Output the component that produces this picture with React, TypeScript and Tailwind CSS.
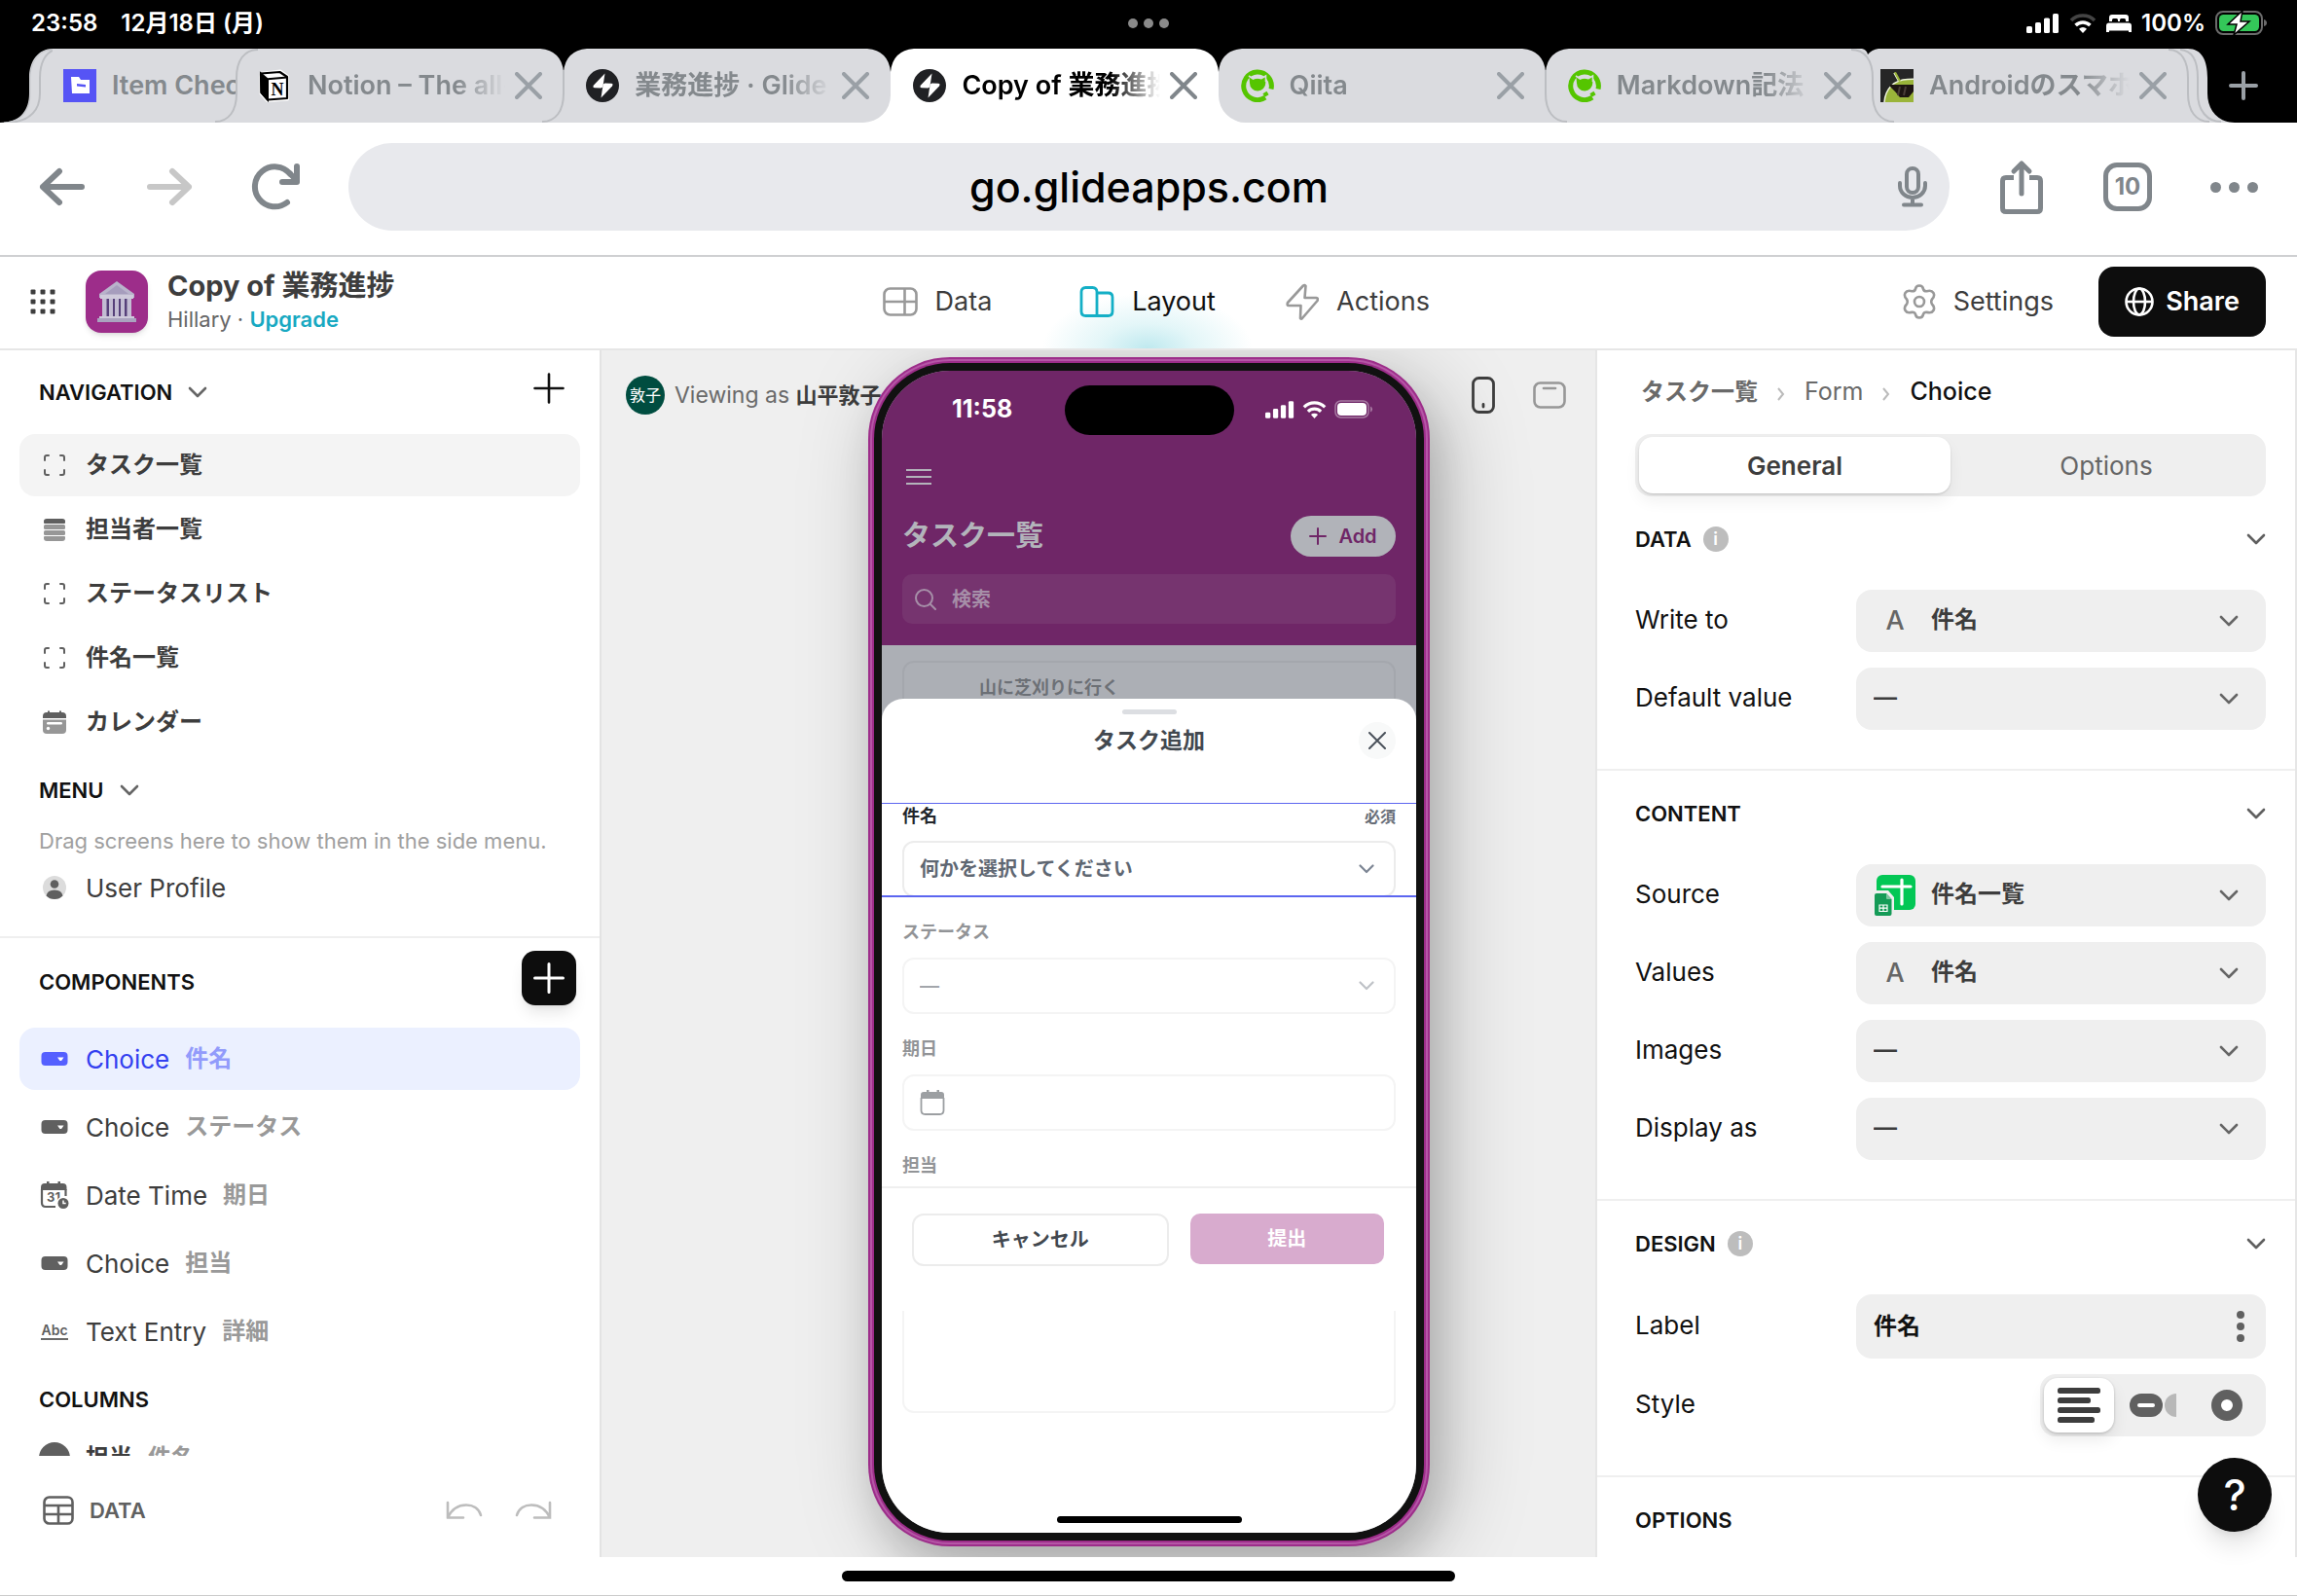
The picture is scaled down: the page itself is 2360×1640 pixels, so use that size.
import { useState } from "react";
import type { ReactNode } from "react";
import clsx from "clsx";

/* ---------- icons ---------- */

const Chevron = ({ className }: { className?: string }) => (
  <svg viewBox="0 0 20 12" className={clsx("h-3 w-5 shrink-0", className)} fill="none">
    <path d="M2 2l8 8 8-8" stroke="currentColor" strokeWidth="2.6" strokeLinecap="round" strokeLinejoin="round" />
  </svg>
);

const Cross = ({ className }: { className?: string }) => (
  <svg viewBox="0 0 28 28" className={clsx("size-7 shrink-0", className)} fill="none">
    <path d="M2 2l24 24M26 2L2 26" stroke="currentColor" strokeWidth="4" strokeLinecap="round" />
  </svg>
);

const Signal = ({ className }: { className?: string }) => (
  <svg viewBox="0 0 34 20" className={className} fill="currentColor">
    <rect x="0" y="13" width="6" height="7" rx="1.6" />
    <rect x="9" y="9" width="6" height="11" rx="1.6" />
    <rect x="18" y="4.5" width="6" height="15.5" rx="1.6" />
    <rect x="27" y="0" width="6" height="20" rx="1.6" />
  </svg>
);

const Wifi = ({ className, weak }: { className?: string; weak?: boolean }) => (
  <svg viewBox="0 0 28 20" className={className} fill="none" stroke="currentColor" strokeWidth="3.6">
    <path d="M2 7a17 17 0 0 1 24 0" stroke={weak ? "#444" : "currentColor"} />
    <path d="M6.600 12a10.500 10.500 0 0 1 14.800 0" />
    <path d="M14 20l-4-4.300a5.800 5.800 0 0 1 8 0z" fill="currentColor" stroke="none" />
  </svg>
);

const GlideLogo = () => (
  <svg viewBox="0 0 34 34" className="size-[34px] shrink-0">
    <circle cx="17" cy="17" r="17" fill="#202124" />
    <path d="M19.500 4.500L8 16.500q-1.500 2.500 1 2.700l6.500.3q1.700-.3 2-2z" fill="#fff" />
    <path d="M15.500 29.500L27 17.500q1.500-2.500-1-2.700l-6.500-.3q-1.700.3-2 2z" fill="#fff" />
  </svg>
);

const QiitaLogo = () => (
  <svg viewBox="0 0 34 34" className="size-[34px] shrink-0">
    <path d="M25 29.200A14.300 14.300 0 1 1 31 20.500" fill="none" stroke="#55c500" strokeWidth="5" />
    <path d="M23.500 27l4-2.500" stroke="#55c500" strokeWidth="4" />
    <path d="M8.500 8l4 2.200q4.500-1.700 8.500-.3l4-2.600.3 7A8 8 0 1 1 9 14.500z" fill="#55c500" />
    <path d="M8 7l4.500 3q4-2 8.500-.3L25.500 7v6" fill="none" stroke="#dadbdf" strokeWidth="1.600" />
  </svg>
);

const NotionLogo = () => (
  <svg viewBox="0 0 34 34" className="size-[34px] shrink-0">
    <path d="M2 4.500L22 2l7.500 5.500V31L8.500 32.500 2 25z" fill="#fff" stroke="#fff" strokeWidth="3" strokeLinejoin="round" />
    <path d="M2 4.500L21.500 3l7.500 5V30L9 31.500 2.500 24z" fill="#fff" stroke="#000" strokeWidth="2.200" strokeLinejoin="round" />
    <path d="M2 4.500l7 6V31.500L2.500 24zM9 10.300L29 8.500" fill="#000" stroke="#000" strokeWidth="2" />
    <text x="19" y="27" textAnchor="middle" fontSize="18" fontWeight="700" fontFamily="Liberation Serif">N</text>
  </svg>
);

const ItemLogo = () => (
  <svg viewBox="0 0 34 34" className="size-[34px] shrink-0">
    <rect width="34" height="34" fill="#5654f5" />
    <path d="M8 8h8l2 3h9v14H9z" fill="#fff" />
    <path d="M14 15l9 1v2.500l-9-1z" fill="#5654f5" />
  </svg>
);

const AndroidLogo = () => (
  <svg viewBox="0 0 34 34" className="size-[34px] shrink-0">
    <rect width="34" height="34" fill="#262626" />
    <path d="M4 34C5 20 14 11 28 10.500l6-.2V34z" fill="#9ab43a" />
    <path d="M4 34C5 20 14 11 28 10.500l6-.2M14 4l5 9" fill="none" stroke="#eef3dc" strokeWidth="1.500" />
    <path d="M14 3.500L19 13l2-1L16 3z" fill="#9ab43a" />
    <path d="M10 16h24v7l-5 6h-9l-5-6-5-5z" fill="#1e1512" />
    <path d="M20 18l-2 9M26 18l-2 9" stroke="#4a3d38" strokeWidth="2" />
  </svg>
);

const FrameIcon = () => (
  <svg viewBox="0 0 24 24" className="size-6" fill="none" stroke="#5f5f5f" strokeWidth="2" strokeLinecap="round">
    <path d="M2 7V4q0-2 2-2h2M18 2h2q2 0 2 2v3M22 17v3q0 2-2 2h-2M6 22H4q-2 0-2-2v-3" />
  </svg>
);

const StackIcon = () => (
  <svg viewBox="0 0 24 24" className="size-6">
    <path d="M1 5V3.500Q1 1 4 1h16q3 0 3 2.500V5q0 1-1 1H2Q1 6 1 5z" fill="#5f5f5f" />
    <rect x="1" y="7" width="22" height="5" rx="1.500" fill="#979797" />
    <rect x="1" y="13" width="22" height="5" rx="1.500" fill="#979797" />
    <path d="M1 20q0-1 1-1h20q1 0 1 1v1q0 3-3 3H4q-3 0-3-3z" fill="#979797" />
  </svg>
);

const CalendarIcon = () => (
  <svg viewBox="0 0 24 24" className="size-6">
    <path d="M0 8V6q0-4 4-4h1V.500h2V2h10V.500h2V2h1q4 0 4 4v2z" fill="#5f5f5f" />
    <path d="M0 9.500h24V20q0 4-4 4H4q-4 0-4-4z" fill="#979797" />
    <rect x="4" y="12" width="16" height="2.500" rx="1.200" fill="#fff" />
    <circle cx="5.500" cy="18.500" r="1.700" fill="#fff" />
  </svg>
);

const ProfileIcon = () => (
  <svg viewBox="0 0 24 24" className="size-6">
    <circle cx="12" cy="12" r="12" fill="#dcdcdc" />
    <circle cx="12" cy="8.500" r="4.300" fill="#5f5f5f" />
    <path d="M3.500 20.500q1-6 8.500-6t8.500 6Q17 24 12 24t-8.500-3.500z" fill="#5f5f5f" />
  </svg>
);

const ChoiceIcon = () => (
  <svg viewBox="0 0 28 14" className="h-3.5 w-7">
    <rect x="0.500" width="27" height="14" rx="4" fill="currentColor" />
    <path d="M17 5.500h6.500l-2 3q-1.200 1-2.400 0z" fill="#fff" />
  </svg>
);

const DateTimeIcon = () => (
  <svg viewBox="0 0 30 28" className="h-7 w-[30px]">
    <path d="M1 9V6q0-4 4-4h2V0h2.500v2h9V0H21v2h2.500q4 0 4 4v3z" fill="#5f5f5f" />
    <path d="M2 8v14q0 4 4 4h10M26.500 8v7" fill="none" stroke="#5f5f5f" strokeWidth="2.200" />
    <text x="7" y="21" fontSize="13" fontWeight="700" fill="#5f5f5f" fontFamily="Inter">31</text>
    <circle cx="24" cy="22.500" r="7" fill="#fff" />
    <circle cx="24" cy="22.500" r="5.500" fill="#5f5f5f" />
    <path d="M24 19.500v3h2.700" fill="none" stroke="#fff" strokeWidth="1.500" />
  </svg>
);

const AbcIcon = () => (
  <span className="w-7 border-b-2 border-[#6a6a6a] text-center text-sm leading-4 font-semibold text-[#5f5f5f]">Abc</span>
);

const BankIcon = () => (
  <svg viewBox="0 0 40 42" className="h-[42px] w-10">
    <path d="M20 0L2 13v4h36v-4z" fill="#b9b3cb" />
    <path d="M20 4L8 13h24z" fill="#a69dbd" />
    <rect x="3" y="14" width="34" height="4" fill="#cfcadb" />
    <rect x="7" y="18" width="26" height="18" fill="#56407a" />
    <g fill="#c3bdd3">
      <rect x="5" y="18" width="4.500" height="18" />
      <rect x="12" y="18" width="4" height="18" />
      <rect x="18" y="18" width="4" height="18" />
      <rect x="24" y="18" width="4" height="18" />
      <rect x="30.500" y="18" width="4.500" height="18" />
    </g>
    <rect x="2" y="36" width="36" height="3" fill="#cfcadb" />
    <rect x="0" y="38" width="40" height="4" fill="#aaa3bf" />
  </svg>
);

const SheetIcon = () => (
  <svg viewBox="0 0 42 42" className="size-[42px] shrink-0">
    <rect x="2" y="0" width="40" height="36" rx="6" fill="#03c755" />
    <path d="M8 12h29M28 5v25" stroke="#fff" strokeWidth="3.200" strokeLinecap="round" />
    <path d="M0 16h14l6 7v19H0z" fill="#efefef" />
    <path d="M2 19h10l5.500 6v15q0 2-2 2H2q-2 0-2-2V21q0-2 2-2z" fill="#159b57" />
    <path d="M12 19l5.500 6H13q-1 0-1-1z" fill="#7cc7a0" />
    <path d="M5 31h8v6.500H5zM5 34.200h8M9 31v6.500" fill="none" stroke="#fff" strokeWidth="1.200" />
  </svg>
);

/* ---------- browser ---------- */

const StatusBar = () => (
  <div className="grid h-[50px] shrink-0 grid-cols-3 items-center bg-black px-8 pb-0.5 text-2xl leading-none font-semibold text-white">
    <div className="flex gap-6">
      <span>23:58</span>
      <span>12月18日 (月)</span>
    </div>
    <div className="flex justify-center gap-1.5">
      <span className="size-2.5 rounded-full bg-[#8a8a8a]" />
      <span className="size-2.5 rounded-full bg-[#8a8a8a]" />
      <span className="size-2.5 rounded-full bg-[#8a8a8a]" />
    </div>
    <div className="-mr-0.5 flex items-center justify-end gap-2.5">
      <Signal className="h-5 w-[34px]" />
      <Wifi weak className="h-5 w-7" />
      <svg viewBox="0 0 26 18" className="h-[18px] w-[26px]" fill="currentColor">
        <path d="M3 7V3q0-3 3-3h14q3 0 3 3v4h-3V5.500Q20 4 18.500 4h-3Q14 4 14 5.500V7h-2V5.500Q12 4 10.500 4h-3Q6 4 6 5.500V7z" />
        <path d="M3 8.500h20q3 0 3 3V18h-3v-1.500H3V18H0v-6.500q0-3 3-3z" />
      </svg>
      <span>100%</span>
      <svg viewBox="0 0 54 26" className="h-[26px] w-[54px]">
        <rect x="1" y="1" width="47" height="23" rx="7" fill="none" stroke="#6b6b6b" strokeWidth="2" />
        <path d="M50 9q3 1 3 3.500T50 16z" fill="#6b6b6b" />
        <rect x="4" y="4" width="41" height="17" rx="4.500" fill="#34c759" />
        <path d="M28 0L13 14h9l-3 11 16-14h-9z" fill="#fff" stroke="#000" strokeWidth="1.500" />
      </svg>
    </div>
  </div>
);

type TabProps = {
  icon: ReactNode;
  title: string;
  active?: boolean;
  wrap?: string;
  shape?: string;
  closable?: boolean;
};

const Tab = ({ icon, title, active, wrap = "flex-1", shape = "pl-[23px]", closable = true }: TabProps) => (
  <div className={clsx("flex min-w-0", wrap)}>
    <div
      className={clsx(
        "flex min-w-0 flex-1 items-center",
        closable && "pr-[22px]",
        active ? "bg-white text-black" : "bg-[#dadbdf] text-[#84898d]",
        shape
      )}
    >
      {icon}
      <button
        type="button"
        className={clsx(
          "ml-4 min-w-0 flex-1 overflow-hidden text-left text-[27px] leading-9 font-semibold whitespace-nowrap",
          closable && "mask-r-from-75% mask-r-to-100%"
        )}
      >
        {title}
      </button>
      {closable && (
        <button type="button" aria-label="Close tab" className={clsx("ml-2.5", active ? "text-[#80868b]" : "text-[#9aa0a6]")}>
          <Cross />
        </button>
      )}
    </div>
  </div>
);

// seam drawn over the point where two tabs meet
const Seam = ({ type }: { type: "left" | "right" | "leftNotch" | "rightNotch" | "notch" }) => (
  <div className="relative w-0">
    <svg viewBox="0 0 48 76" className="absolute top-0 -left-6 z-10 h-[76px] w-12" fill="none">
      {type === "left" && <path d="M46 1C32 1 24 12 24 30V46C24 64 16 75 2 75" stroke="#bcbec2" strokeWidth="2" />}
      {type === "right" && (
        <>
          <path d="M13 0Q18 1 19 6Q23 1 30 0z" fill="#000" />
          <path d="M2 1C16 1 24 12 24 30V46C24 64 32 75 46 75" stroke="#bcbec2" strokeWidth="2" />
        </>
      )}
      {type.toLowerCase().includes("notch") && <path d="M0 0Q22 2 24 24Q26 2 48 0z" fill="#000" />}
      {type === "leftNotch" && <path d="M24 22V46C24 64 16 75 2 75" stroke="#bcbec2" strokeWidth="2" />}
      {type === "rightNotch" && <path d="M24 22V46C24 64 32 75 46 75" stroke="#bcbec2" strokeWidth="2" />}
    </svg>
  </div>
);

const TabStrip = () => (
  <div className="flex h-[76px] shrink-0 bg-black">
    <svg viewBox="0 0 54 76" className="h-[76px] w-[54px] shrink-0">
      <path d="M0 76C22 76 30 62 30 46V30C30 12 40 0 54 0V76z" fill="#dadbdf" />
      <path d="M10 76C32 74 41 62 41 46V30C41 14 47 4 56 1" fill="none" stroke="#bcbec2" strokeWidth="2" />
      <path d="M4 76C24 75 31 62 31 46V30C31 14 40 1 54 1" fill="none" stroke="#c6c8cc" strokeWidth="1" />
    </svg>
    <Tab icon={<ItemLogo />} title="Item Checklist" closable={false} wrap="w-[189px]" shape="pl-[11px]" />
    <Seam type="left" />
    <Tab icon={<NotionLogo />} title="Notion – The all-in-one" />
    <Seam type="leftNotch" />
    <Tab icon={<GlideLogo />} title="業務進捗 · Glide" wrap="flex-1 bg-white" shape="rounded-br-[28px] pl-[23px]" />
    <Seam type="notch" />
    <Tab active icon={<GlideLogo />} title="Copy of 業務進捗" />
    <Seam type="notch" />
    <Tab icon={<QiitaLogo />} title="Qiita" wrap="flex-1 bg-white" shape="rounded-bl-[28px] pl-[23px]" />
    <Seam type="rightNotch" />
    <Tab icon={<QiitaLogo />} title="Markdown記法" />
    <Seam type="right" />
    <Tab icon={<AndroidLogo />} title="Androidのスマホ" wrap="w-[324px]" shape="pl-2" />
    <div className="flex w-28 items-center">
      <svg viewBox="0 0 48 76" className="h-[76px] w-12 shrink-0 overflow-visible">
        <path d="M48 76C30 76 20 62 20 46V30C20 12 14 0 0 0V76z" fill="#dadbdf" />
        <path d="M-20 1C-6 1 0 14 0 30V46C0 64 8 75 22 75" fill="none" stroke="#bcbec2" strokeWidth="2" />
        <path d="M-8 1C5 2 10 14 10 30V46C10 64 20 75 34 75" fill="none" stroke="#bcbec2" strokeWidth="2" />
      </svg>
      <button type="button" aria-label="New tab" className="z-10 -ml-1.5 text-[#9aa0a6]">
        <svg viewBox="0 0 30 30" className="size-[30px]">
          <path d="M15 2v26M2 15h26" stroke="currentColor" strokeWidth="4" strokeLinecap="round" />
        </svg>
      </button>
    </div>
  </div>
);

const Toolbar = () => (
  <div className="flex h-[138px] shrink-0 items-center border-b-2 border-[#cfd0d2] bg-white px-10 pb-1 text-[#80868b]">
    <button type="button" aria-label="Back">
      <svg viewBox="0 0 48 40" className="h-10 w-12" fill="none" stroke="currentColor" strokeWidth="6" strokeLinecap="round" strokeLinejoin="round">
        <path d="M21 4L4 20l17 16M4 20h40" />
      </svg>
    </button>
    <button type="button" aria-label="Forward" className="ml-[62px] text-[#c7c7c7]">
      <svg viewBox="0 0 48 40" className="h-10 w-12" fill="none" stroke="currentColor" strokeWidth="6" strokeLinecap="round" strokeLinejoin="round">
        <path d="M27 4l17 16-17 16M44 20H4" />
      </svg>
    </button>
    <button type="button" aria-label="Reload" className="ml-[60px]">
      <svg viewBox="0 0 50 48" className="h-12 w-[50px]" fill="none" stroke="currentColor" strokeWidth="6" strokeLinecap="round">
        <path d="M37 40A20.500 20.500 0 1 1 40 10.500" />
        <path d="M47 3v16H32" strokeLinejoin="round" />
        <path d="M40 10.500l7 7" />
      </svg>
    </button>
    <div className="ml-[50px] flex h-[90px] flex-1 items-center rounded-full bg-[#e8e9ed] pr-[22px]">
      <input
        aria-label="Address"
        defaultValue="go.glideapps.com"
        className="min-w-0 flex-1 bg-transparent pl-[54px] text-center text-[43px] leading-none font-medium text-black outline-none"
      />
      <button type="button" aria-label="Voice search">
        <svg viewBox="0 0 32 42" className="h-[42px] w-8" fill="none" stroke="currentColor" strokeWidth="4">
          <rect x="10" y="2" width="12" height="25" rx="6" />
          <path d="M3 17v3a13 12 0 0 0 26 0v-3M16 33v6M7 39.500h18" strokeLinecap="round" />
        </svg>
      </button>
    </div>
    <button type="button" aria-label="Share" className="ml-[50px]">
      <svg viewBox="0 0 48 56" className="h-14 w-12" fill="none" stroke="currentColor" strokeWidth="5" strokeLinecap="round" strokeLinejoin="round">
        <path d="M16 18.500H8q-3.500 0-3.500 3.500v28q0 3.500 3.500 3.500h32q3.500 0 3.500-3.500V22q0-3.500-3.500-3.500h-8" strokeLinecap="butt" />
        <path d="M24 35V4M16 12l8-8 8 8" />
      </svg>
    </button>
    <button
      type="button"
      className="ml-[60px] flex size-[50px] items-center justify-center rounded-[14px] border-5 border-[#80868b] text-2xl font-bold"
    >
      10
    </button>
    <button type="button" aria-label="More" className="ml-[60px] flex gap-2">
      <span className="size-[11px] rounded-full bg-[#80868b]" />
      <span className="size-[11px] rounded-full bg-[#80868b]" />
      <span className="size-[11px] rounded-full bg-[#80868b]" />
    </button>
  </div>
);

/* ---------- builder header ---------- */

const AppHeader = () => (
  <header className="grid h-24 shrink-0 grid-cols-[1fr_auto_1fr] items-center border-b-2 border-[#e6e6e6] bg-white pr-8 pl-[30px] text-[27px] text-[#3d3d3d]">
    <div className="flex items-center pb-0.5">
      <button type="button" aria-label="Apps">
        <svg viewBox="0 0 28 28" className="size-7" fill="#3d3d3d">
          {[0, 1, 2].map((r) =>
            [0, 1, 2].map((c) => <rect key={`${r}${c}`} x={1.5 + c * 10} y={1.5 + r * 10} width="5" height="5" rx="1" />)
          )}
        </svg>
      </button>
      <div className="ml-[30px] flex size-16 items-center justify-center rounded-[16px] bg-[#9d2d8a] shadow-md">
        <BankIcon />
      </div>
      <div className="ml-5">
        <h1 className="text-[29px] leading-9 font-bold">Copy of 業務進捗</h1>
        <p className="text-[22px] leading-8 text-[#666]">
          Hillary ·{" "}
          <a href="#upgrade" className="font-semibold text-[#18a9c2]">
            Upgrade
          </a>
        </p>
      </div>
    </div>
    <nav className="flex h-full">
      <button type="button" className="flex w-[216px] items-center justify-center gap-[18px] pb-0.5">
        <svg viewBox="0 0 36 30" className="h-[30px] w-9" fill="none" stroke="#999" strokeWidth="2.600">
          <rect x="1.500" y="1.500" width="33" height="27" rx="6" />
          <path d="M2 15h32M22.500 2v26" />
        </svg>
        Data
      </button>
      <button
        type="button"
        className="flex w-[216px] items-center justify-center gap-[18px] bg-[radial-gradient(ellipse_50%_60%_at_50%_100%,#bfe9ef_0%,#e3f6f8_45%,#ffffff_100%)] pb-0.5 text-[#111]"
      >
        <svg viewBox="0 0 36 32" className="h-8 w-9" fill="none" stroke="#14afc6" strokeWidth="2.800">
          <path d="M18 30V6q0-4.500-4.500-4.500h-7Q2 1.500 2 6v20q0 4.500 4.500 4.500h23Q34 30.500 34 26V11.500Q34 7 29.500 7H18" />
        </svg>
        Layout
      </button>
      <button type="button" className="flex w-[216px] items-center justify-center gap-[18px] pb-0.5">
        <svg viewBox="0 0 34 38" className="h-[38px] w-[34px]" fill="none" stroke="#999" strokeWidth="2.600" strokeLinejoin="round">
          <path d="M18 2.500L2 20q-1 3 1 3h12.500l-.5 13q1 1 2 0L32.500 18q1-3-1-3H19.500L20.500 3q-1-1.500-2.500-.5z" />
        </svg>
        Actions
      </button>
    </nav>
    <div className="flex items-center justify-end pb-0.5">
      <button type="button" className="flex items-center gap-[18px]">
        <svg viewBox="0 0 34 36" className="h-9 w-[34px]" fill="none" stroke="#999" strokeWidth="2.600" strokeLinejoin="round">
          <path d="M13 5q.5-3.500 4-3.500T21 5q.8 2.500 3.500 2.300c3-1 5.500-.8 7 1.700 1.600 3 .5 4.500-1.500 6.500q-1.500 2.500 0 5c2 2 3.100 3.500 1.500 6.500-1.500 2.500-4 2.700-7 1.700Q21.800 28.500 21 31q-.5 3.500-4 3.500T13 31q-.8-2.500-3.500-2.300c-3 1-5.500.8-7-1.700-1.600-3-.5-4.500 1.500-6.500q1.500-2.500 0-5C2 13.500.9 12 2.500 9 4 6.500 6.500 6.300 9.500 7.300Q12.200 7.500 13 5z" />
          <circle cx="17" cy="18" r="5" />
        </svg>
        Settings
      </button>
      <button
        type="button"
        className="ml-[46px] flex h-[72px] w-[172px] items-center justify-center gap-3 rounded-[16px] bg-[#0d0d0d] text-[27px] font-semibold text-white"
      >
        <svg viewBox="0 0 30 30" className="size-[30px]" fill="none" stroke="currentColor" strokeWidth="2.600">
          <circle cx="15" cy="15" r="13.500" />
          <ellipse cx="15" cy="15" rx="6" ry="13.500" />
          <path d="M1.500 15h27" />
        </svg>
        Share
      </button>
    </div>
  </header>
);

/* ---------- left sidebar ---------- */

const screens = [
  { name: "タスク一覧", icon: <FrameIcon /> },
  { name: "担当者一覧", icon: <StackIcon /> },
  { name: "ステータスリスト", icon: <FrameIcon /> },
  { name: "件名一覧", icon: <FrameIcon /> },
  { name: "カレンダー", icon: <CalendarIcon /> },
];

const components = [
  { type: "Choice", name: "件名", icon: <ChoiceIcon /> },
  { type: "Choice", name: "ステータス", icon: <ChoiceIcon /> },
  { type: "Date Time", name: "期日", icon: <DateTimeIcon /> },
  { type: "Choice", name: "担当", icon: <ChoiceIcon /> },
  { type: "Text Entry", name: "詳細", icon: <AbcIcon /> },
];

const rowClass = "flex h-16 shrink-0 items-center gap-4 rounded-[16px] pl-5 text-left";

const Sidebar = () => {
  const [screen, setScreen] = useState(0);
  const [component, setComponent] = useState(0);

  return (
    <aside className="flex w-[618px] shrink-0 flex-col border-r-2 border-[#e3e3e3] bg-white text-[#3d3d3d]">
      <div className="flex flex-col border-b-2 border-[#efefef] px-5 pb-[18px]">
        <div className="flex h-[86px] items-center justify-between pr-4 pl-5">
          <button type="button" className="flex items-center gap-4 text-[22px] font-semibold text-[#111]">
            NAVIGATION <Chevron className="text-[#666]" />
          </button>
          <button type="button" aria-label="Add screen" className="mb-2">
            <svg viewBox="0 0 32 32" className="size-8">
              <path d="M16 1.500v29M1.500 16h29" stroke="#111" strokeWidth="2.600" strokeLinecap="round" />
            </svg>
          </button>
        </div>
        <nav className="flex flex-col gap-0.5">
          {screens.map((s, i) => (
            <button
              key={s.name}
              type="button"
              onClick={() => setScreen(i)}
              className={clsx(rowClass, "text-2xl font-semibold", screen === i && "bg-[#f4f4f4]")}
            >
              <span className="flex w-8 justify-center">{s.icon}</span>
              {s.name}
            </button>
          ))}
        </nav>
        <button type="button" className="flex h-[76px] items-center gap-4 pl-5 text-[22px] font-semibold text-[#111]">
          MENU <Chevron className="text-[#666]" />
        </button>
        <p className="pl-5 text-[22px] leading-7 whitespace-nowrap text-[#a0a0a0]">
          Drag screens here to show them in the side menu.
        </p>
        <button type="button" className={clsx(rowClass, "mt-0.5 text-[26px]")}>
          <span className="flex w-8 justify-center">
            <ProfileIcon />
          </span>
          User Profile
        </button>
      </div>

      <div className="flex min-h-0 flex-1 flex-col overflow-hidden px-5">
        <div className="flex h-[92px] shrink-0 items-center justify-between pr-1 pl-5">
          <h2 className="pb-0.5 text-[22px] font-semibold text-[#111]">COMPONENTS</h2>
          <button
            type="button"
            aria-label="Add component"
            className="mb-2.5 flex size-14 items-center justify-center rounded-[14px] bg-[#0d0d0d] shadow-lg"
          >
            <svg viewBox="0 0 32 32" className="size-8">
              <path d="M16 1.500v29M1.500 16h29" stroke="#fff" strokeWidth="3" strokeLinecap="round" />
            </svg>
          </button>
        </div>
        <div className="flex flex-col gap-1.5">
          {components.map((c, i) => (
            <button
              key={c.name}
              type="button"
              onClick={() => setComponent(i)}
              className={clsx(rowClass, "text-[26px]", component === i && "bg-[#ebf0ff] text-[#3340f0]")}
            >
              <span className={clsx("flex w-8 justify-center", component === i ? "text-[#5560ff]" : "text-[#606060]")}>
                {c.icon}
              </span>
              {c.type}
              <span className={clsx("text-2xl font-semibold", component === i ? "text-[#929bfb]" : "text-[#999]")}>
                {c.name}
              </span>
            </button>
          ))}
        </div>
        <h2 className="h-[66px] shrink-0 pt-[22px] pl-5 text-[22px] leading-8 font-semibold text-[#111]">COLUMNS</h2>
        <button type="button" className={clsx(rowClass, "text-2xl font-semibold")}>
          <span className="size-8 rounded-full bg-[#5f5f5f]" />
          担当
          <span className="text-[#999]">件名</span>
        </button>
      </div>

      <div className="flex h-[104px] shrink-0 items-center pt-2 pr-[49px] pl-11 text-[#606060]">
        <button type="button" className="flex items-center gap-4 text-[22px] font-semibold">
          <svg viewBox="0 0 32 30" className="h-[30px] w-8" fill="none" stroke="currentColor" strokeWidth="2.600">
            <rect x="1.500" y="1.500" width="29" height="27" rx="5" />
            <path d="M2 10h28M2 19h28M16 10v18" />
          </svg>
          DATA
        </button>
        <button type="button" aria-label="Undo" className="ml-auto text-[#bdbdbd]">
          <svg viewBox="0 0 38 20" className="h-5 w-[38px]" fill="none" stroke="currentColor" strokeWidth="2.600" strokeLinecap="round">
            <path d="M2 2v15.500h16M2 17.500C7 7 14 4.500 21 4.500S34 8 36 15" />
          </svg>
        </button>
        <button type="button" aria-label="Redo" className="ml-[33px] text-[#bdbdbd]">
          <svg viewBox="0 0 38 20" className="h-5 w-[38px]" fill="none" stroke="currentColor" strokeWidth="2.600" strokeLinecap="round">
            <path d="M36 2v15.500H20M36 17.500C31 7 24 4.500 17 4.500S4 8 2 15" />
          </svg>
        </button>
      </div>
    </aside>
  );
};

/* ---------- phone preview ---------- */

const PhoneHeader = () => (
  <div className="bg-[#6f2667] text-[#b3b4bb]">
    <div className="grid h-20 grid-cols-[1fr_auto_1fr] items-center text-white">
      <span className="pl-[72px] text-[25px] font-bold">11:58</span>
      <span className="h-[51px] w-[174px] rounded-full bg-black" />
      <span className="flex items-center justify-end gap-2 pr-11">
        <Signal className="h-[18px] w-[30px]" />
        <Wifi className="h-[18px] w-[25px]" />
        <svg viewBox="0 0 40 20" className="h-5 w-10">
          <rect x="1" y="1" width="34" height="17" rx="5.500" fill="none" stroke="#a87ba3" strokeWidth="1.500" />
          <rect x="3" y="3" width="30" height="13" rx="4" fill="#fff" />
          <path d="M37 6.500q2 1 2 3t-2 3z" fill="#a87ba3" />
        </svg>
      </span>
    </div>
    <div className="px-[21px]">
      <button type="button" aria-label="Menu" className="mt-5 ml-1 block">
        <svg viewBox="0 0 26 18" className="h-[18px] w-[26px]">
          <path d="M0 2h26M0 9h26M0 16h26" stroke="currentColor" strokeWidth="2.200" />
        </svg>
      </button>
      <div className="mt-[31px] flex items-center justify-between">
        <h2 className="text-[29px] leading-9 font-bold">タスク一覧</h2>
        <button
          type="button"
          className="flex h-[42px] w-[108px] items-center justify-center gap-3 rounded-full bg-[#b1b3b9] text-xl font-semibold text-[#6f2667]"
        >
          <svg viewBox="0 0 18 18" className="size-[18px]">
            <path d="M9 1v16M1 9h16" stroke="currentColor" strokeWidth="2" strokeLinecap="round" />
          </svg>
          Add
        </button>
      </div>
      <label className="mt-[18px] flex h-[51px] items-center gap-4 rounded-[10px] bg-[#76346f] px-[13px]">
        <svg viewBox="0 0 22 22" className="size-[22px] shrink-0" fill="none" stroke="#a68fa8" strokeWidth="2" strokeLinecap="round">
          <circle cx="9.500" cy="9.500" r="8.500" />
          <path d="M16 16l5 5" />
        </svg>
        <input
          aria-label="検索"
          placeholder="検索"
          className="min-w-0 flex-1 bg-transparent text-xl font-semibold outline-none placeholder:text-[#a68fa8]"
        />
      </label>
    </div>
    <div className="h-[22px]" />
  </div>
);

const fieldBox = "h-[58px] w-full rounded-[12px] border-2 bg-white px-4";
const fieldLabel = "text-lg leading-6 font-semibold text-[#929497]";

const PhoneSelect = ({ id, value, muted }: { id: string; value: string; muted?: boolean }) => (
  <div className={clsx("flex items-center", fieldBox, muted ? "border-[#f4f4f4] text-[#a3a6ab]" : "border-[#ececec] text-[#5f6772]")}>
    <select id={id} className="min-w-0 flex-1 appearance-none bg-transparent text-xl font-semibold outline-none">
      <option>{value}</option>
    </select>
    <svg viewBox="0 0 16 10" className={clsx("mr-1 h-2.5 w-4", muted ? "text-[#bfc2c7]" : "text-[#7d8694]")} fill="none">
      <path d="M1.500 1.500L8 8l6.500-6.500" stroke="currentColor" strokeWidth="2.200" strokeLinecap="round" strokeLinejoin="round" />
    </svg>
  </div>
);

const Phone = () => (
  <div className="mt-[7px] mb-[11px] flex w-[577px] shrink-0 rounded-[84px] bg-[#9d2d8a] p-0.5 shadow-[16px_16px_90px_rgba(0,0,0,0.22),8px_24px_40px_rgba(0,0,0,0.14)]">
    <div className="flex min-w-0 flex-1 rounded-[82px] bg-[#b556a6] p-[2px]">
      <div className="flex min-w-0 flex-1 rounded-[80px] bg-[#9d2d8a] p-0.5">
        <div className="flex min-w-0 flex-1 rounded-[78px] bg-[#111] p-2">
          <div className="flex min-w-0 flex-1 flex-col overflow-hidden rounded-[70px] bg-[#acafb5]">
            <PhoneHeader />
            <div className="h-[76px] px-[21px] pt-4">
              <div className="h-[90px] rounded-t-[12px] border-2 border-[#a4a7ad] pt-3 pl-[77px] text-lg leading-7 font-semibold text-[#6c7076]">
                山に芝刈りに行く
              </div>
            </div>
            <div className="relative -mt-[21px] flex min-h-0 flex-1 flex-col rounded-t-[22px] bg-white">
              <div className="mx-auto mt-[11px] h-[5px] w-14 rounded-full bg-[#dcdee2]" />
              <div className="mt-2 grid h-[38px] grid-cols-[1fr_auto_1fr] items-center px-[21px]">
                <h3 className="col-start-2 text-[23px] leading-9 font-semibold text-[#42484f]">タスク追加</h3>
                <button
                  type="button"
                  aria-label="Close"
                  className="flex size-[38px] items-center justify-center justify-self-end rounded-full bg-[#f8f9f9]"
                >
                  <svg viewBox="0 0 18 18" className="size-[18px]">
                    <path d="M1 1l16 16M17 1L1 17" stroke="#4a515a" strokeWidth="2" strokeLinecap="round" />
                  </svg>
                </button>
              </div>
              <div className="relative mt-[45px] h-[97px] px-[21px] pt-0.5">
                <div className="flex h-[37px] items-start justify-between">
                  <label htmlFor="subject" className="text-lg leading-6 font-bold text-[#22262b]">件名</label>
                  <span className="text-base leading-6 font-semibold text-[#676d77]">必須</span>
                </div>
                <PhoneSelect id="subject" value="何かを選択してください" />
                {/* outline of the selected component */}
                <div className="pointer-events-none absolute inset-0 border-t border-b-2 border-[#5c66f0]" />
              </div>
              <div className="flex h-[297px] flex-col overflow-hidden px-[21px] pt-6">
                <label htmlFor="status" className={fieldLabel}>ステータス</label>
                <div className="mt-3.5">
                  <PhoneSelect id="status" value="—" muted />
                </div>
                <label htmlFor="due" className={clsx("mt-6", fieldLabel)}>期日</label>
                <div className={clsx("mt-3.5 flex shrink-0 items-center", fieldBox, "border-[#f4f4f4]")}>
                  <svg viewBox="0 0 26 26" className="size-[26px]">
                    <path d="M1 9V5q0-3 3-3h3V0h2.500v2h8V0H20v2h2q3 0 3 3v4z" fill="#9c9fa2" />
                    <path d="M1.500 8v13q0 4 4 4h15q4 0 4-4V8" fill="none" stroke="#9c9fa2" strokeWidth="1.800" />
                  </svg>
                  <input id="due" className="min-w-0 flex-1 bg-transparent pl-3 text-xl outline-none" />
                </div>
                <span className={clsx("mt-6", fieldLabel)}>担当</span>
              </div>
              <div className="flex h-32 items-start gap-[22px] border-t-2 border-[#efefef] pt-[26px] pr-[33px] pl-[31px]">
                <button type="button" className="h-[54px] flex-[263] rounded-[12px] border-2 border-[#ececec] text-xl font-semibold text-[#42484f]">
                  キャンセル
                </button>
                <button type="button" className="h-[52px] flex-[202] rounded-[10px] bg-[#d8abce] text-xl font-semibold text-white">
                  提出
                </button>
              </div>
              <div className="h-[105px] px-[21px]">
                <textarea
                  aria-label="詳細"
                  className="block size-full resize-none rounded-b-[12px] border-2 border-t-0 border-[#f4f4f4] outline-none"
                />
              </div>
              <div className="mx-auto mt-auto mb-2.5 h-[7px] w-[190px] rounded-full bg-black" />
            </div>
          </div>
        </div>
      </div>
    </div>
  </div>
);

const Canvas = () => (
  <section className="flex min-w-0 flex-1 overflow-hidden bg-[#efefef]">
    <div className="flex h-[92px] w-[274px] shrink-0 items-center gap-2.5 pl-[25px] text-[23px] whitespace-nowrap text-[#6a6a6a]">
      <span className="flex size-10 shrink-0 items-center justify-center rounded-full bg-[#004d40] text-base text-white">
        敦子
      </span>
      <span>
        Viewing as <span className="text-[22px] font-semibold text-[#3d3d3d]">山平敦子</span>
      </span>
    </div>
    <Phone />
    <div className="flex h-[92px] flex-1 items-center justify-end gap-[39px] pr-[30px]">
      <button type="button" aria-label="Phone preview">
        <svg viewBox="0 0 24 38" className="h-[38px] w-6" fill="none" stroke="#3d3d3d" strokeWidth="2.800">
          <rect x="1.500" y="1.500" width="21" height="35" rx="6" />
          <path d="M12 28.500v2.500" strokeLinecap="round" />
        </svg>
      </button>
      <button type="button" aria-label="Tablet preview">
        <svg viewBox="0 0 34 28" className="h-7 w-[34px]" fill="none" stroke="#979797" strokeWidth="2.600">
          <rect x="1.500" y="1.500" width="31" height="25" rx="6" />
          <path d="M11 7h12" strokeLinecap="round" />
        </svg>
      </button>
    </div>
  </section>
);

/* ---------- right panel ---------- */

const Section = ({ title, info, first, children }: { title: string; info?: boolean; first?: boolean; children?: ReactNode }) => (
  <section className={clsx("pr-[30px] pl-[39px]", !first && "border-t-2 border-[#efefef]")}>
    <div className="flex h-[88px] items-center gap-3">
      <h2 className="text-[22px] font-semibold text-[#111]">{title}</h2>
      {info && (
        <span className="flex size-[26px] items-center justify-center rounded-full bg-[#bdbdbd] text-lg leading-none font-semibold text-white">
          i
        </span>
      )}
      <button type="button" aria-label={`Toggle ${title}`} className="ml-auto flex text-[#606060]">
        <Chevron />
      </button>
    </div>
    {children && <div className="flex flex-col gap-4 pt-2 pb-10">{children}</div>}
  </section>
);

const Row = ({ id, label, children }: { id: string; label: string; children: ReactNode }) => (
  <div className="flex items-center">
    <label htmlFor={id} className="w-[227px] shrink-0 pb-0.5 text-[26px] leading-8 text-[#111]">
      {label}
    </label>
    {children}
  </div>
);

const SelectRow = ({ id, label, value, icon }: { id: string; label: string; value: string; icon?: ReactNode }) => (
  <Row id={id} label={label}>
    <div className="flex h-16 min-w-0 flex-1 items-center rounded-[16px] bg-[#efefef] pr-7 pl-[18px] text-[#3d3d3d]">
      {icon && <span className="mr-[15px] flex w-11 justify-center">{icon}</span>}
      <select id={id} className="h-full min-w-0 flex-1 appearance-none bg-transparent pb-0.5 text-2xl font-semibold outline-none">
        <option>{value}</option>
      </select>
      <Chevron className="text-[#666]" />
    </div>
  </Row>
);

const LetterIcon = () => <span className="text-[27px] leading-8 font-medium text-[#666]">A</span>;

const styleOptions = [
  {
    name: "Dropdown",
    icon: (
      <svg viewBox="0 0 44 36" className="h-9 w-11" fill="#3d3d3d">
        <rect width="44" height="6" rx="2.500" />
        <rect y="10" width="34" height="6" rx="2.500" />
        <rect y="20" width="44" height="6" rx="2.500" />
        <rect y="30" width="38" height="6" rx="2.500" />
      </svg>
    ),
  },
  {
    name: "Chips",
    icon: (
      <svg viewBox="0 0 48 24" className="h-6 w-12">
        <rect width="34" height="24" rx="12" fill="#606060" />
        <path d="M10 12h14" stroke="#fff" strokeWidth="4" strokeLinecap="round" />
        <path d="M48 0v24a12 12 0 0 1 0-24z" fill="#b8b8b8" />
      </svg>
    ),
  },
  {
    name: "Radio",
    icon: (
      <svg viewBox="0 0 32 32" className="size-8">
        <circle cx="16" cy="16" r="11" fill="#fff" stroke="#606060" strokeWidth="10" />
      </svg>
    ),
  },
];

const Inspector = () => {
  const [tab, setTab] = useState("General");
  const [style, setStyle] = useState("Dropdown");

  return (
    <aside className="flex w-[721px] shrink-0 flex-col overflow-hidden border-r-2 border-l-2 border-[#e6e6e6] bg-white">
      <div className="flex h-[86px] shrink-0 items-center gap-5 pl-[45px] text-[25px] text-[#6a6a6a]">
        <a href="#tasks" className="text-2xl font-semibold">タスク一覧</a>
        <svg viewBox="0 0 8 14" className="mt-1 h-3.5 w-2" fill="none" stroke="#bbb" strokeWidth="2">
          <path d="M1 1l5 6-5 6" />
        </svg>
        <a href="#form">Form</a>
        <svg viewBox="0 0 8 14" className="mt-1 h-3.5 w-2" fill="none" stroke="#bbb" strokeWidth="2">
          <path d="M1 1l5 6-5 6" />
        </svg>
        <span className="font-medium text-[#111]">Choice</span>
      </div>
      <div className="mr-[30px] ml-[39px] flex h-16 shrink-0 rounded-[16px] bg-[#efefef] px-1 py-[3px]">
        {["General", "Options"].map((name) => (
          <button
            key={name}
            type="button"
            onClick={() => setTab(name)}
            className={clsx(
              "flex-1 rounded-[14px] text-[26px]",
              tab === name
                ? "bg-white font-semibold text-[#3d3d3d] shadow-[0_1px_2px_rgba(0,0,0,0.15),0_8px_16px_rgba(0,0,0,0.06)]"
                : "text-[#666]"
            )}
          >
            {name}
          </button>
        ))}
      </div>
      <Section title="DATA" info first>
        <SelectRow id="write-to" label="Write to" value="件名" icon={<LetterIcon />} />
        <SelectRow id="default" label="Default value" value="—" />
      </Section>
      <Section title="CONTENT">
        <SelectRow id="source" label="Source" value="件名一覧" icon={<SheetIcon />} />
        <SelectRow id="values" label="Values" value="件名" icon={<LetterIcon />} />
        <SelectRow id="images" label="Images" value="—" />
        <SelectRow id="display" label="Display as" value="—" />
      </Section>
      <Section title="DESIGN" info>
        <Row id="label" label="Label">
          <div className="flex h-[66px] min-w-0 flex-1 items-center rounded-[16px] bg-[#efefef] pr-[22px] pl-[18px]">
            <input id="label" defaultValue="件名" className="min-w-0 flex-1 bg-transparent text-2xl font-semibold text-[#111] outline-none" />
            <button type="button" aria-label="Label options" className="flex flex-col gap-1">
              <span className="size-2 rounded-full bg-[#606060]" />
              <span className="size-2 rounded-full bg-[#606060]" />
              <span className="size-2 rounded-full bg-[#606060]" />
            </button>
          </div>
        </Row>
        <div className="flex items-center justify-between" role="radiogroup" aria-labelledby="style-label">
          <span id="style-label" className="pb-0.5 text-[26px] leading-8 text-[#111]">Style</span>
          <div className="flex h-16 gap-1 rounded-[16px] bg-[#efefef] p-1">
            {styleOptions.map((o) => (
              <label
                key={o.name}
                className={clsx(
                  "flex w-[72px] items-center justify-center rounded-[14px]",
                  style === o.name && "bg-white shadow-[0_1px_3px_rgba(0,0,0,0.2),0_8px_16px_rgba(0,0,0,0.08)]"
                )}
              >
                <input
                  type="radio"
                  name="style"
                  aria-label={o.name}
                  className="sr-only"
                  checked={style === o.name}
                  onChange={() => setStyle(o.name)}
                />
                {o.icon}
              </label>
            ))}
          </div>
        </div>
      </Section>
      <Section title="OPTIONS" />
    </aside>
  );
};

const App = () => {
  return (
    <div className="flex h-screen flex-col overflow-hidden bg-white [font-family:Inter,'Noto_Sans_CJK_JP',sans-serif]">
      <StatusBar />
      <TabStrip />
      <Toolbar />
      <AppHeader />
      <main className="relative flex min-h-0 flex-1">
        <Sidebar />
        <Canvas />
        <Inspector />
        <button
          type="button"
          aria-label="Help"
          className="absolute right-[26px] bottom-[26px] flex size-[76px] items-center justify-center rounded-full bg-[#0d0d0d] text-[44px] leading-none font-medium text-white shadow-xl"
        >
          ?
        </button>
      </main>
      <div className="flex h-10 shrink-0 items-center justify-center border-b border-[#ccc]">
        <div className="h-[11px] w-[630px] rounded-full bg-black" />
      </div>
    </div>
  );
};

export default App;
